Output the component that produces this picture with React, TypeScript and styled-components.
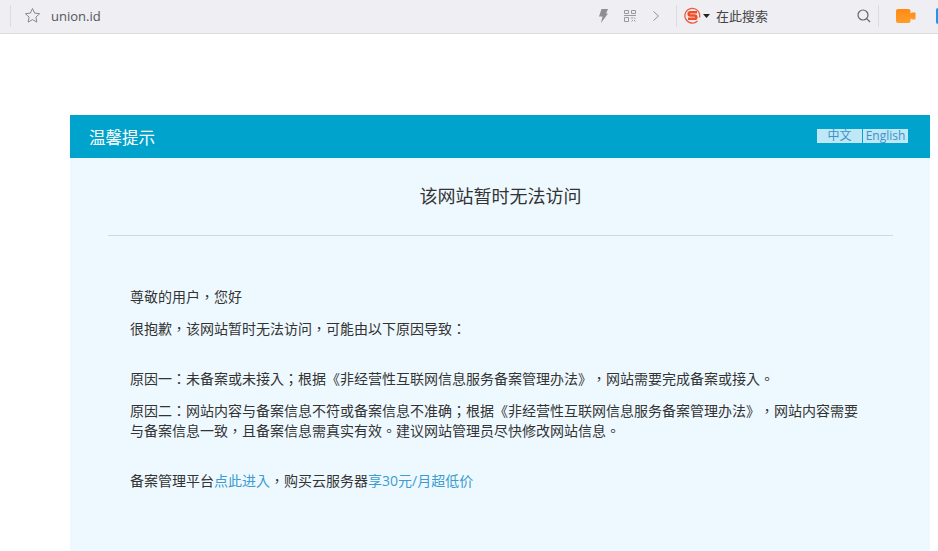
import styled, { createGlobalStyle } from 'styled-components'

const GlobalStyle = createGlobalStyle`
  html, body {
    margin: 0;
    padding: 0;
    height: 551px;
    overflow: hidden;
    background: #fff;
    font-family: "Open Sans", "Noto Sans CJK TC", sans-serif;
    text-spacing-trim: space-all;
  }
`

const BrowserBar = styled.div`
  height: 31px;
  padding-bottom: 2px;
  box-sizing: content-box;
  display: flex;
  align-items: center;
  background: #eeeef3;
  border-bottom: 1px solid #dcdce0;
  overflow: hidden;
`

const BarDivider = styled.span<{ $left: number; $right: number }>`
  flex: none;
  width: 1px;
  height: 22px;
  margin: 0 ${({ $right }) => $right}px 0 ${({ $left }) => $left}px;
  background: #dcdce0;
`

const Address = styled.span`
  margin-left: 10px;
  font-size: 13px;
  color: #555560;
`

const Spacer = styled.div`
  flex: 1;
`

const BarIcon = styled.svg<{ $left: number }>`
  flex: none;
  display: block;
  margin-left: ${({ $left }) => $left}px;
`

const SearchHint = styled.span`
  flex: none;
  width: 141px;
  margin-left: 6px;
  font-size: 13px;
  color: #444;
`

const BlueEdge = styled.span`
  flex: none;
  width: 2px;
  height: 16px;
  margin-left: 20px;
  border-radius: 2px 0 0 2px;
  background: #1e96f0;
`

const Notice = styled.main`
  width: 860px;
  margin: 81px 0 0 70px;
  height: 436px;
  background: #eef9ff;
`

const NoticeHeader = styled.header`
  height: 43px;
  display: flex;
  align-items: center;
  justify-content: space-between;
  padding: 0 22px 0 19px;
  background: #00a3cb;
`

const HeaderTitle = styled.h2`
  margin: 0;
  font-size: 16.5px;
  font-weight: 400;
  color: #fff;
`

const LangSwitch = styled.div`
  display: flex;
  gap: 1px;
  margin-top: -1px;
`

const LangItem = styled.a`
  width: 45px;
  height: 14px;
  line-height: 14px;
  text-align: center;
  font-size: 12px;
  color: #3a93c9;
  background: #bfe7f5;
`

const NoticeTitle = styled.h1`
  margin: 0 37px 0 38px;
  height: 77px;
  line-height: 76px;
  text-align: center;
  font-size: 18px;
  font-weight: 400;
  color: #333;
  border-bottom: 1px solid #ccd9e0;
`

const NoticeBody = styled.div`
  padding: 51px 70px 0 60px;
`

const Paragraph = styled.p<{ $gap: number }>`
  margin: 0 0 ${({ $gap }) => $gap}px;
  font-size: 14px;
  line-height: 20px;
  color: #333;
`

const TextLink = styled.a`
  color: #3d9bcf;
`

function App() {
  return (
    <>
      <GlobalStyle />
      <BrowserBar>
        <BarDivider $left={10} $right={13} />
        <svg width="17" height="17" viewBox="0 0 17 17" fill="none" stroke="#8a8a8a" strokeWidth="1">
          <path d="M8.5 1.5l2.1 4.6 5 .6-3.7 3.4 1 5-4.4-2.5-4.4 2.5 1-5L1.4 6.700l5-.6z" />
        </svg>
        <Address>union.id</Address>
        <Spacer />
        <BarIcon $left={0} width="9" height="14" viewBox="0 0 9 14">
          <path d="M2.500 0H9L7 4.500h2L2 14l1.500-6.500H0z" fill="#8f8f8f" />
        </BarIcon>
        <BarIcon $left={16} width="12" height="12" viewBox="0 0 12 12" fill="none" stroke="#9a9a9a">
          <path d="M.5.500h4v3h-4zM7.500.500h4v3h-4zM.5 7.500h4v4h-4z" />
          <path d="M0 5.500h12M7 8h2M10 7.500l1.500 1.500M7.500 11.500L9 10M10 10l1.500 1.500" />
        </BarIcon>
        <BarIcon $left={17} width="6" height="10" viewBox="0 0 6 10" fill="none" stroke="#8f8f8f">
          <path d="M.5.500L5.500 5 .5 9.500" />
        </BarIcon>
        <BarDivider $left={17} $right={7} />
        <svg width="17" height="17" viewBox="0 0 17 17">
          <path d="M13.500 14A7.400 7.400 0 1 1 15.500 10.500" fill="none" stroke="#f4593a" strokeWidth="1.300" />
          <path d="M13 5.200H6.300a1.600 1.600 0 0 0 0 3.300h4.400a1.600 1.600 0 0 1 0 3.300H4" fill="none" stroke="#ee4f28" strokeWidth="2.500" />
        </svg>
        <BarIcon $left={2} width="7" height="4" viewBox="0 0 7 4">
          <path d="M0 0h7L3.500 4z" fill="#222" />
        </BarIcon>
        <SearchHint>在此搜索</SearchHint>
        <svg width="14" height="14" viewBox="0 0 14 14" fill="none" stroke="#666" strokeWidth="1.200">
          <circle cx="6" cy="6" r="5" />
          <path d="M9.700 9.700L13 13" />
        </svg>
        <BarDivider $left={7} $right={17} />
        <svg width="20" height="14" viewBox="0 0 20 14">
          <defs>
            <linearGradient id="camera" x1="0" y1="0" x2="0" y2="1">
              <stop offset="0" stopColor="#ff8a12" />
              <stop offset="1" stopColor="#ff9d2a" />
            </linearGradient>
          </defs>
          <rect width="14.500" height="14" rx="2" fill="url(#camera)" />
          <path d="M14 5l2-1.500h3.500v7H16L14 9z" fill="url(#camera)" />
        </svg>
        <BlueEdge />
      </BrowserBar>
      <Notice>
        <NoticeHeader>
          <HeaderTitle>温馨提示</HeaderTitle>
          <LangSwitch>
            <LangItem>中文</LangItem>
            <LangItem>English</LangItem>
          </LangSwitch>
        </NoticeHeader>
        <NoticeTitle>该网站暂时无法访问</NoticeTitle>
        <NoticeBody>
          <Paragraph $gap={12}>尊敬的用户，您好</Paragraph>
          <Paragraph $gap={30}>很抱歉，该网站暂时无法访问，可能由以下原因导致：</Paragraph>
          <Paragraph $gap={12}>原因一：未备案或未接入；根据《非经营性互联网信息服务备案管理办法》，网站需要完成备案或接入。</Paragraph>
          <Paragraph $gap={30}>原因二：网站内容与备案信息不符或备案信息不准确；根据《非经营性互联网信息服务备案管理办法》，网站内容需要与备案信息一致，且备案信息需真实有效。建议网站管理员尽快修改网站信息。</Paragraph>
          <Paragraph $gap={0}>
            备案管理平台<TextLink>点此进入</TextLink>，购买云服务器<TextLink>享30元/月超低价</TextLink>
          </Paragraph>
        </NoticeBody>
      </Notice>
    </>
  )
}

export default App
